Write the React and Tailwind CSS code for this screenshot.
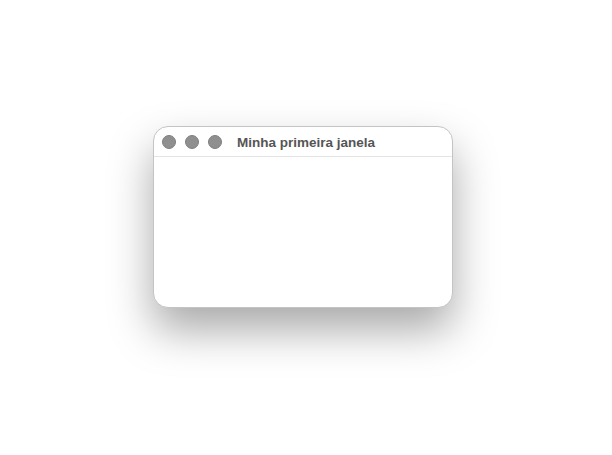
export default function App() {
  return (
    <div
      className="min-h-[455px] w-full bg-white pl-[153px] pt-[126px]"
      style={{ fontFamily: '"Liberation Sans", Arial, sans-serif' }}
    >
      <div className="flex h-[182px] w-[300px] flex-col overflow-hidden rounded-[15px] border border-[#c4c4c4] bg-white shadow-[0_22px_44px_rgba(0,0,0,0.34)]">
        <div className="flex h-[30px] items-center border-b border-[#e4e4e4] pl-[8px]">
          <div className="flex gap-[9px]">
            <span className="h-[14px] w-[14px] rounded-full border border-[#7f7f7f] bg-[#8f8f8f]" />
            <span className="h-[14px] w-[14px] rounded-full border border-[#7f7f7f] bg-[#8f8f8f]" />
            <span className="h-[14px] w-[14px] rounded-full border border-[#7f7f7f] bg-[#8f8f8f]" />
          </div>
          <span className="ml-[15px] pt-[3px] text-[13.5px] font-bold text-[#555555]">
            Minha primeira janela
          </span>
        </div>
        <div className="flex-1" />
      </div>
    </div>
  );
}
